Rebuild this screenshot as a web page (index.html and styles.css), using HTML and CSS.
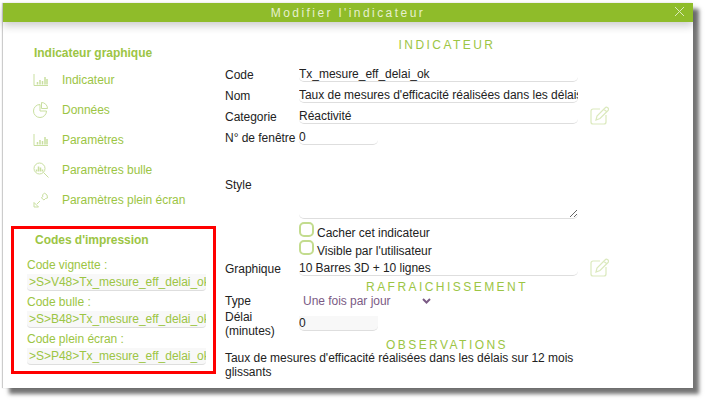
FILE: index.html
```html
<!DOCTYPE html>
<html lang="fr">
<head>
  <meta charset="UTF-8">
  <title>Modifier l'indicateur</title>
  <link rel="stylesheet" href="styles.css">
</head>
<body>

  <div class="dialog">
    <div class="title-bar">
      <span class="title">Modifier l'indicateur</span>
      <svg class="close" width="11" height="11" viewBox="0 0 11 11"><path d="M1 1l9 9M10 1l-9 9"/></svg>
    </div>

    <div class="content">
      <div class="sidebar">
        <h3 class="side-title">Indicateur graphique</h3>
        <ul class="side-menu">
          <li>
            <svg class="side-icon" width="16" height="14" viewBox="0 0 16 14"><path d="M1 1v11.500h14"/><path class="bars" d="M4.500 11.500V9M7 11.500V7M9.500 11.500V8M12 11.500V4M14 11.500V6"/></svg>
            Indicateur
          </li>
          <li>
            <svg class="side-icon" width="16" height="16" viewBox="0 0 16 16"><path d="M7 2.500a6.500 6.500 0 1 0 6.500 6.500H7z"/><path d="M8.500 .5a6 6 0 0 1 6 6h-6z"/></svg>
            Données
          </li>
          <li>
            <svg class="side-icon" width="16" height="14" viewBox="0 0 16 14"><path d="M1 1v11.500h14"/><path class="bars" d="M4.500 11.500V9M7 11.500V7M9.500 11.500V8M12 11.500V4M14 11.500V6"/></svg>
            Paramètres
          </li>
          <li>
            <svg class="side-icon" width="16" height="16" viewBox="0 0 16 16"><circle cx="6.500" cy="6.500" r="5.500"/><path d="M10.500 10.500l5 5"/><path class="bars" d="M3.500 9.500V7.500M5.500 9.500V4.500M7.500 9.500V5.500M9.500 9.500V7.500"/></svg>
            Paramètres bulle
          </li>
          <li>
            <svg class="side-icon" width="16" height="16" viewBox="0 0 16 16"><path d="M1 10.500V15h4.500zM4 12l3-3"/><path d="M9.500 7l1.500 1 1.500-1.500 2-.5-.5-3-2.500-2-2 2 .5 1.500-1.500 1z"/></svg>
            Paramètres plein écran
          </li>
        </ul>

        <div class="print-codes">
          <h3 class="side-title print-title">Codes d'impression</h3>
          <label class="code-label">Code vignette :</label>
          <input class="code-input" type="text" value="&gt;S&gt;V48&gt;Tx_mesure_eff_delai_ok">
          <label class="code-label">Code bulle :</label>
          <input class="code-input" type="text" value="&gt;S&gt;B48&gt;Tx_mesure_eff_delai_ok">
          <label class="code-label">Code plein écran :</label>
          <input class="code-input" type="text" value="&gt;S&gt;P48&gt;Tx_mesure_eff_delai_ok">
        </div>
      </div>

      <div class="main">
        <h2 class="section first">INDICATEUR</h2>

        <div class="row">
          <label>Code</label>
          <input class="field" type="text" value="Tx_mesure_eff_delai_ok">
        </div>
        <div class="row">
          <label>Nom</label>
          <input class="field" type="text" value="Taux de mesures d'efficacité réalisées dans les délais sur 12 mois glissants">
        </div>
        <div class="row">
          <label>Categorie</label>
          <input class="field" type="text" value="Réactivité">
          <svg class="edit" width="19" height="19" viewBox="0 0 19 19"><path d="M10 3H3a2 2 0 0 0-2 2v11a2 2 0 0 0 2 2h11a2 2 0 0 0 2-2V9"/><path d="M6 14l1-4 8-8a1.400 1.400 0 0 1 3 2.500l-8 8zM14 3.500l2.500 2"/></svg>
        </div>
        <div class="row">
          <label>N° de fenêtre</label>
          <input class="field small" type="text" value="0">
        </div>

        <div class="row style-row">
          <label>Style</label>
          <textarea class="field area"></textarea>
        </div>

        <div class="check-row first-check"><span class="check"></span>Cacher cet indicateur</div>
        <div class="check-row"><span class="check"></span>Visible par l'utilisateur</div>

        <div class="row graph-row">
          <label>Graphique</label>
          <input class="field" type="text" value="10 Barres 3D + 10 lignes">
          <svg class="edit" width="19" height="19" viewBox="0 0 19 19"><path d="M10 3H3a2 2 0 0 0-2 2v11a2 2 0 0 0 2 2h11a2 2 0 0 0 2-2V9"/><path d="M6 14l1-4 8-8a1.400 1.400 0 0 1 3 2.500l-8 8zM14 3.500l2.500 2"/></svg>
        </div>

        <h2 class="section refresh">RAFRAICHISSEMENT</h2>

        <div class="row type-row">
          <label>Type</label>
          <div class="select">
            Une fois par jour
            <svg width="9" height="6" viewBox="0 0 9 6"><path d="M1 1l3.500 3.500L8 1"/></svg>
          </div>
        </div>
        <div class="row delay-row">
          <label>Délai<br>(minutes)</label>
          <input class="field small filled" type="text" value="0">
        </div>

        <h2 class="section notes">OBSERVATIONS</h2>
        <p class="note-text">Taux de mesures d'efficacité réalisées dans les délais sur 12 mois glissants</p>
      </div>
    </div>
  </div>

</body>
</html>
```
FILE: styles.css
```css
:root {
  --green: #8fbc2a;
  --soft-green: #9cc544;
  --pale-green: #c9dfa0;
  --line: #dedede;
  --text: #222;
}
* {
  box-sizing: border-box;
}
html, body {
  height: 100%;
}
body {
  margin: 0;
  background: #fff;
  font-family: "Liberation Sans", Arial, sans-serif;
  font-size: 12px;
  letter-spacing: -0.03px;
  color: var(--text);
  overflow: hidden;
}
.dialog {
  width: 690px;
  height: 385px;
  margin: 3px 0 0 3px;
  background: #fff;
  box-shadow: 6px 6px 4px rgba(0, 0, 0, 0.55), -1px 0 1px rgba(0, 0, 0, 0.2);
}
.title-bar {
  height: 19px;
  background: var(--green);
  box-shadow: 0 4px 8px rgba(0, 0, 0, 0.2);
  display: flex;
  align-items: center;
  justify-content: center;
  position: relative;
}
.title {
  color: #e6f0cf;
  letter-spacing: 2.45px;
  font-size: 12px;
}
.close {
  position: absolute;
  right: 8px;
  top: 3px;
  fill: none;
  stroke: #dcebbd;
  stroke-width: 1;
}
.content {
  display: flex;
  padding-top: 1px;
}

/* left column */
.sidebar {
  width: 222px;
  padding: 23px 0 0 8px;
}
.side-title {
  margin: 0;
  padding-left: 23px;
  font-size: 12px;
  line-height: 14px;
  font-weight: bold;
  color: var(--soft-green);
}
.side-menu {
  list-style: none;
  margin: 5px 0 0;
  padding: 0;
}
.side-menu li {
  height: 30px;
  display: flex;
  align-items: center;
  color: var(--soft-green);
}
.side-icon {
  flex: none;
  margin: 0 13px 0 22px;
  fill: none;
  stroke: var(--pale-green);
  stroke-width: 1;
}
.side-icon .bars {
  stroke-width: 1.500;
}
.print-codes {
  width: 205px;
  height: 148px;
  margin-top: 11px;
  border: 3px solid #f00;
  padding: 4px 0 0 13px;
}
.print-title {
  padding-left: 8px;
  margin-bottom: 11px;
}
.code-label {
  display: block;
  height: 16px;
  line-height: 15px;
  color: var(--soft-green);
}
.code-input {
  display: block;
  width: 179px;
  height: 17px;
  margin-bottom: 4px;
  padding: 0 0 0 2px;
  border: 0;
  border-bottom: 1px solid var(--line);
  border-radius: 0 0 4px 4px;
  background: #f8f8f8;
  font: 12px "Liberation Sans", Arial, sans-serif;
  letter-spacing: -0.03px;
  color: var(--soft-green);
}

/* form */
.main {
  width: 444px;
}
.section {
  margin: 0;
  text-align: center;
  font-size: 12px;
  line-height: 14px;
  font-weight: normal;
  letter-spacing: 2.45px;
  color: var(--soft-green);
}
.section.first {
  margin-top: 15px;
  margin-bottom: 9px;
}
.row {
  height: 21px;
  display: flex;
  align-items: flex-end;
  position: relative;
}
.row label {
  width: 74px;
  flex: none;
  line-height: 14px;
}
.field {
  width: 279px;
  height: 17px;
  padding: 2px 0 0;
  border: 0;
  border-bottom: 1px solid var(--line);
  border-radius: 0 0 5px 5px;
  background: #fff;
  font: 12px "Liberation Sans", Arial, sans-serif;
  letter-spacing: -0.03px;
  color: var(--text);
}
.field.small {
  width: 79px;
}
.field.filled {
  background: #f8f8f8;
  height: 15px;
  padding: 0;
}
.edit {
  position: absolute;
  left: 365px;
  bottom: -1px;
  fill: none;
  stroke: #dbe9bd;
  stroke-width: 1.200;
}
.style-row {
  height: 74px;
  align-items: flex-start;
}
.style-row label {
  margin-top: 33px;
}
.area {
  height: 74px;
  resize: vertical;
}
.check-row {
  height: 18px;
  padding-left: 74px;
  display: flex;
  align-items: flex-end;
  line-height: 14px;
}
.first-check {
  margin-top: 3px;
}
.check {
  width: 15px;
  height: 15px;
  margin-right: 3px;
  margin-bottom: 3px;
  border: 2px solid #c3dc8e;
  border-radius: 5px;
}
.graph-row {
  height: 18px;
}
.section.refresh {
  margin-top: 4px;
}
.type-row {
  height: 14px;
}
.select {
  width: 132px;
  padding-left: 4px;
  display: flex;
  align-items: center;
  justify-content: space-between;
  line-height: 14px;
  color: #7b5b85;
}
.select svg {
  fill: none;
  stroke: #7b5b85;
  stroke-width: 2;
}
.delay-row {
  height: 31px;
  align-items: center;
}
.section.notes {
  margin-top: 1px;
  line-height: 11px;
}
.note-text {
  margin: 0;
  width: 390px;
  line-height: 14px;
}
```
